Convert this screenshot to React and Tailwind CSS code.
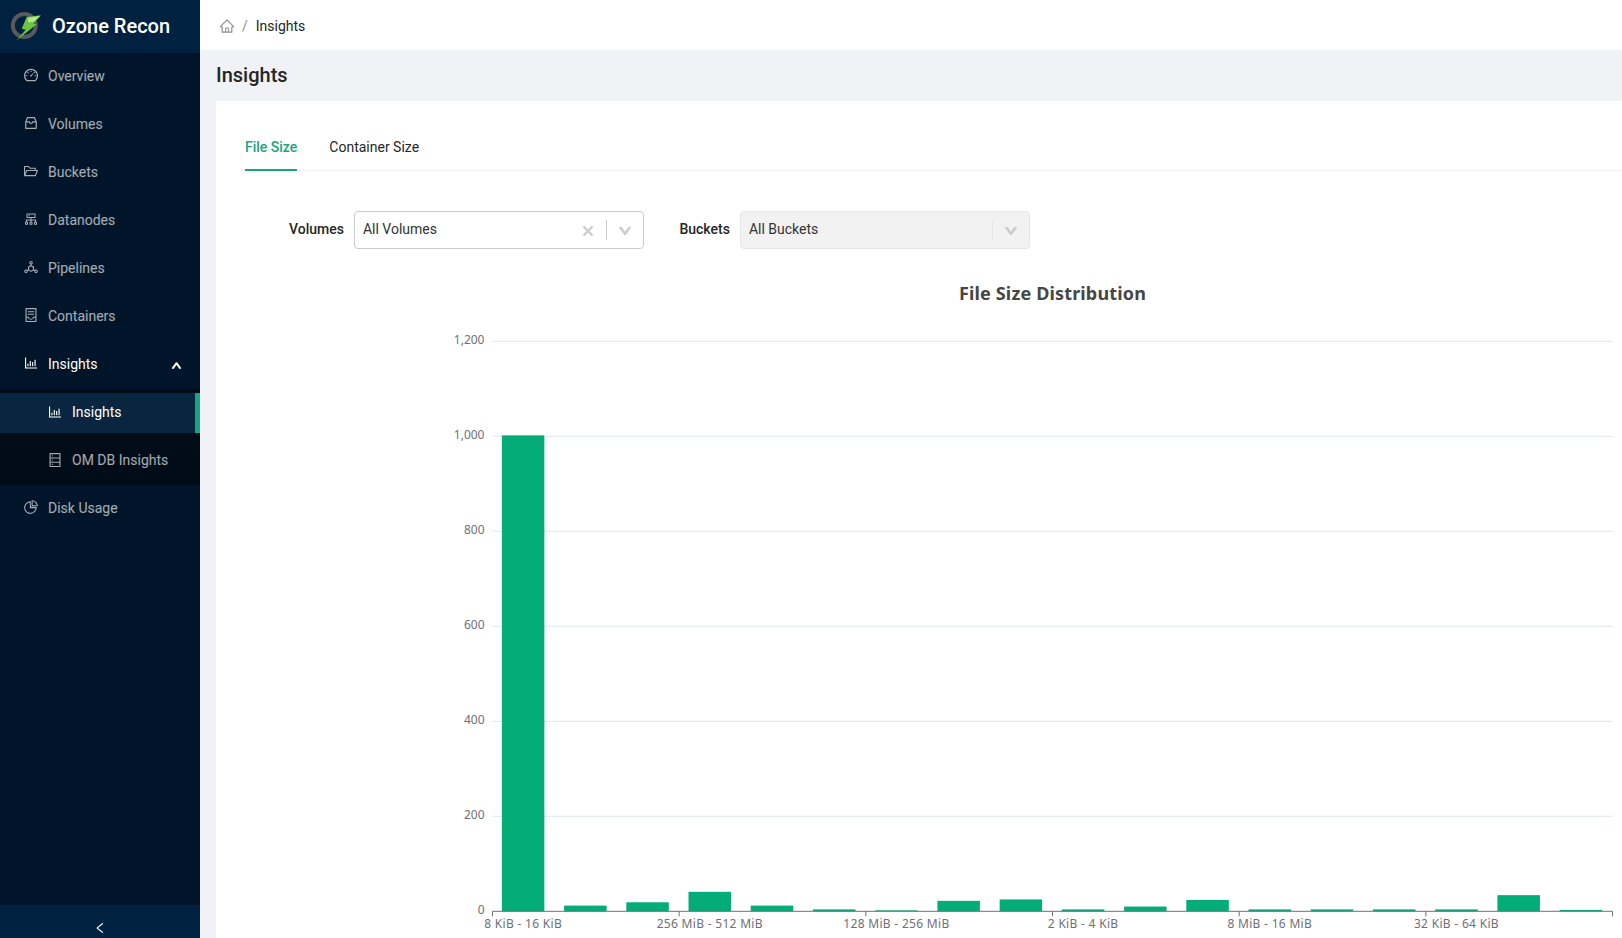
import {
  AiOutlineBarChart,
  AiOutlineCluster,
  AiOutlineContainer,
  AiOutlineDashboard,
  AiOutlineDatabase,
  AiOutlineDeploymentUnit,
  AiOutlineDown,
  AiOutlineFolderOpen,
  AiOutlineHome,
  AiOutlineInbox,
  AiOutlineLeft,
  AiOutlinePieChart,
  AiOutlineUp,
} from 'react-icons/ai'

const topItems = [
  { label: 'Overview', icon: AiOutlineDashboard },
  { label: 'Volumes', icon: AiOutlineInbox },
  { label: 'Buckets', icon: AiOutlineFolderOpen },
  { label: 'Datanodes', icon: AiOutlineCluster },
  { label: 'Pipelines', icon: AiOutlineDeploymentUnit },
  { label: 'Containers', icon: AiOutlineContainer },
]

const values = [1002, 12, 19, 41, 12, 4, 2, 22, 25, 4, 10, 24, 4, 4, 4, 4, 34, 3]
const yTicks = [0, 200, 400, 600, 800, 1000, 1200]
const xLabels = [
  '8 KiB - 16 KiB',
  '256 MiB - 512 MiB',
  '128 MiB - 256 MiB',
  '2 KiB - 4 KiB',
  '8 MiB - 16 MiB',
  '32 KiB - 64 KiB',
]

function Logo() {
  return (
    <svg width="33" height="33" viewBox="0 0 33 33" className="shrink-0">
      <circle cx="15.3" cy="15.5" r="11.5" fill="none" stroke="#5a5a5a" strokeWidth="4" />
      <polygon points="17.7,7 32,5.3 24.3,13.7 27.7,14.3 7.7,30.3 16.7,19.7 12.7,18.7" fill="#6cc644" />
      <polygon points="19,8 31,6 24,12 19,12" fill="#b5e88a" />
    </svg>
  )
}

function NavItem({ icon: Icon, label, active }) {
  return (
    <div className={`flex h-10 items-center gap-[9px] pl-[23px] ${active ? 'text-white' : 'text-white/65'}`}>
      <Icon className="-mt-0.5 text-base" />
      <span>{label}</span>
    </div>
  )
}

function Sidebar() {
  return (
    <aside className="flex h-full w-[200px] shrink-0 flex-col bg-[#001529]">
      <div className="flex h-[53px] shrink-0 items-center gap-[10px] bg-[#002140] pl-[9px]">
        <Logo />
        <span className="-mt-0.5 text-xl font-medium text-white">Ozone Recon</span>
      </div>
      <nav className="flex flex-1 flex-col pt-[3px] text-sm">
        <div className="flex flex-col gap-2">
          {topItems.map((item) => (
            <NavItem key={item.label} {...item} />
          ))}
          <div className="flex h-10 items-center pr-[18px] text-white">
            <div className="flex-1">
              <NavItem icon={AiOutlineBarChart} label="Insights" active />
            </div>
            <AiOutlineUp className="mt-0.5 text-[11px]" strokeWidth={110} />
          </div>
        </div>
        <div className="mt-[5px] flex flex-col gap-2 bg-[#000c17] py-1">
          <div className="relative flex h-10 items-center gap-[9px] bg-[#0a2540] pl-[47px] text-white">
            <AiOutlineBarChart className="-mt-0.5 text-base" />
            <span className="-mt-0.5">Insights</span>
            <span className="absolute top-0 right-0 h-full w-[5px] bg-[#1aa57a]" />
          </div>
          <div className="flex h-10 items-center gap-[9px] pl-[47px] text-white/65">
            <AiOutlineDatabase className="-mt-0.5 text-base" />
            <span className="-mt-0.5">OM DB Insights</span>
          </div>
        </div>
        <div className="mt-[3px]">
          <NavItem icon={AiOutlinePieChart} label="Disk Usage" />
        </div>
      </nav>
      <div className="flex h-[33px] shrink-0 justify-center bg-[#002140] pt-4 text-white">
        <AiOutlineLeft className="text-sm" />
      </div>
    </aside>
  )
}

function Select({ label, value, clearable, disabled }) {
  return (
    <div className="flex items-center">
      <span className="mr-2.5 -mt-0.5 font-medium text-[#262626]">{label}</span>
      <div
        className={`flex h-[38px] w-[290px] items-center rounded border ${
          disabled ? 'border-[#e6e6e6] bg-[#f2f2f2]' : 'border-[#cccccc] bg-white'
        }`}
      >
        <span className="-mt-0.5 flex-1 pl-2 text-[#333333]">{value}</span>
        {clearable && (
          <svg width="12" height="12" viewBox="0 0 12 12" className="mr-3 mt-0.5">
            <path d="M1.5 1.5l9 9M10.5 1.5l-9 9" stroke="#cccccc" strokeWidth="2.4" />
          </svg>
        )}
        <span className={`h-5 w-px ${disabled ? 'bg-[#e6e6e6]' : 'bg-[#cccccc]'}`} />
        <span className="flex w-9 justify-center pt-0.5">
          <AiOutlineDown className="text-sm text-[#cccccc]" strokeWidth={110} />
        </span>
      </div>
    </div>
  )
}

function Chart() {
  const left = 252.5
  const right = 1372.5
  const base = 641.3
  const pitch = (right - left) / values.length
  const barWidth = 42.5
  const labelFont = { fontFamily: '"Noto Sans", sans-serif' }

  return (
    <svg width="1382" height="700" className="mt-[21px] block">
      <text
        x={(left + right) / 2}
        y="30"
        textAnchor="middle"
        fontSize="18"
        fontWeight="700"
        fill="#464646"
        letterSpacing="0.15"
        style={labelFont}
      >
        File Size Distribution
      </text>
      {yTicks.map((t) => {
        const y = base - t * 0.475
        return (
          <g key={t}>
            {t > 0 && <line x1={left} x2={right} y1={y} y2={y} stroke="#e0e6f1" />}
            <text x={left - 8} y={y + 3} textAnchor="end" fontSize="12" fill="#6e7079" style={labelFont}>
              {t.toLocaleString('en-US')}
            </text>
          </g>
        )
      })}
      {values.map((v, i) => (
        <rect
          key={i}
          x={left + pitch * (i + 0.5) - barWidth / 2 - 0.5}
          y={base - v * 0.475}
          width={barWidth}
          height={v * 0.475}
          fill="#04ac78"
        />
      ))}
      <line x1={left} x2={right} y1={base} y2={base} stroke="#6e7079" />
      {[0, 1, 2, 3, 4, 5, 6].map((i) => (
        <line
          key={i}
          x1={left + pitch * 3 * i}
          x2={left + pitch * 3 * i}
          y1={base}
          y2={base + 5}
          stroke="#6e7079"
        />
      ))}
      {xLabels.map((l, i) => (
        <text
          key={l}
          x={left + pitch * (3 * i + 0.5) - 0.5}
          y={base + 17}
          textAnchor="middle"
          fontSize="12"
          fill="#6e7079"
          letterSpacing="0.3"
          style={labelFont}
        >
          {l}
        </text>
      ))}
    </svg>
  )
}

export default function App() {
  return (
    <div className="flex h-[938px] w-[1622px] overflow-hidden bg-[#f0f2f5] font-['Roboto',sans-serif] text-sm text-[#262626]">
      <Sidebar />
      <main className="flex min-w-0 flex-1 flex-col">
        <div className="flex h-[50px] shrink-0 items-center bg-white pl-[19px] text-[#262626]">
          <AiOutlineHome className="mt-0.5 text-base text-[#8c8c8c]" />
          <span className="mt-0.5 mr-2 ml-[7px] text-[#8c8c8c]">/</span>
          <span className="mt-0.5">Insights</span>
        </div>
        <h1 className="-mt-px flex h-[52px] shrink-0 items-center pl-4 text-xl font-medium">Insights</h1>
        <div className="ml-4 min-h-0 flex-1 overflow-hidden bg-white pl-6">
          <div className="flex h-[70px] gap-8 border-b border-[#f0f0f0] pl-[5px]">
            <div className="relative flex items-end pb-[13px] font-medium text-[#1aa57a]">
              File Size
              <span className="absolute right-0 -bottom-px left-0 h-0.5 bg-[#1aa57a]" />
            </div>
            <div className="flex items-end pb-[13px]">Container Size</div>
          </div>
          <div className="mt-[40px] flex gap-[35.5px] pl-[49px]">
            <Select label="Volumes" value="All Volumes" clearable />
            <Select label="Buckets" value="All Buckets" disabled />
          </div>
          <Chart />
        </div>
      </main>
    </div>
  )
}
